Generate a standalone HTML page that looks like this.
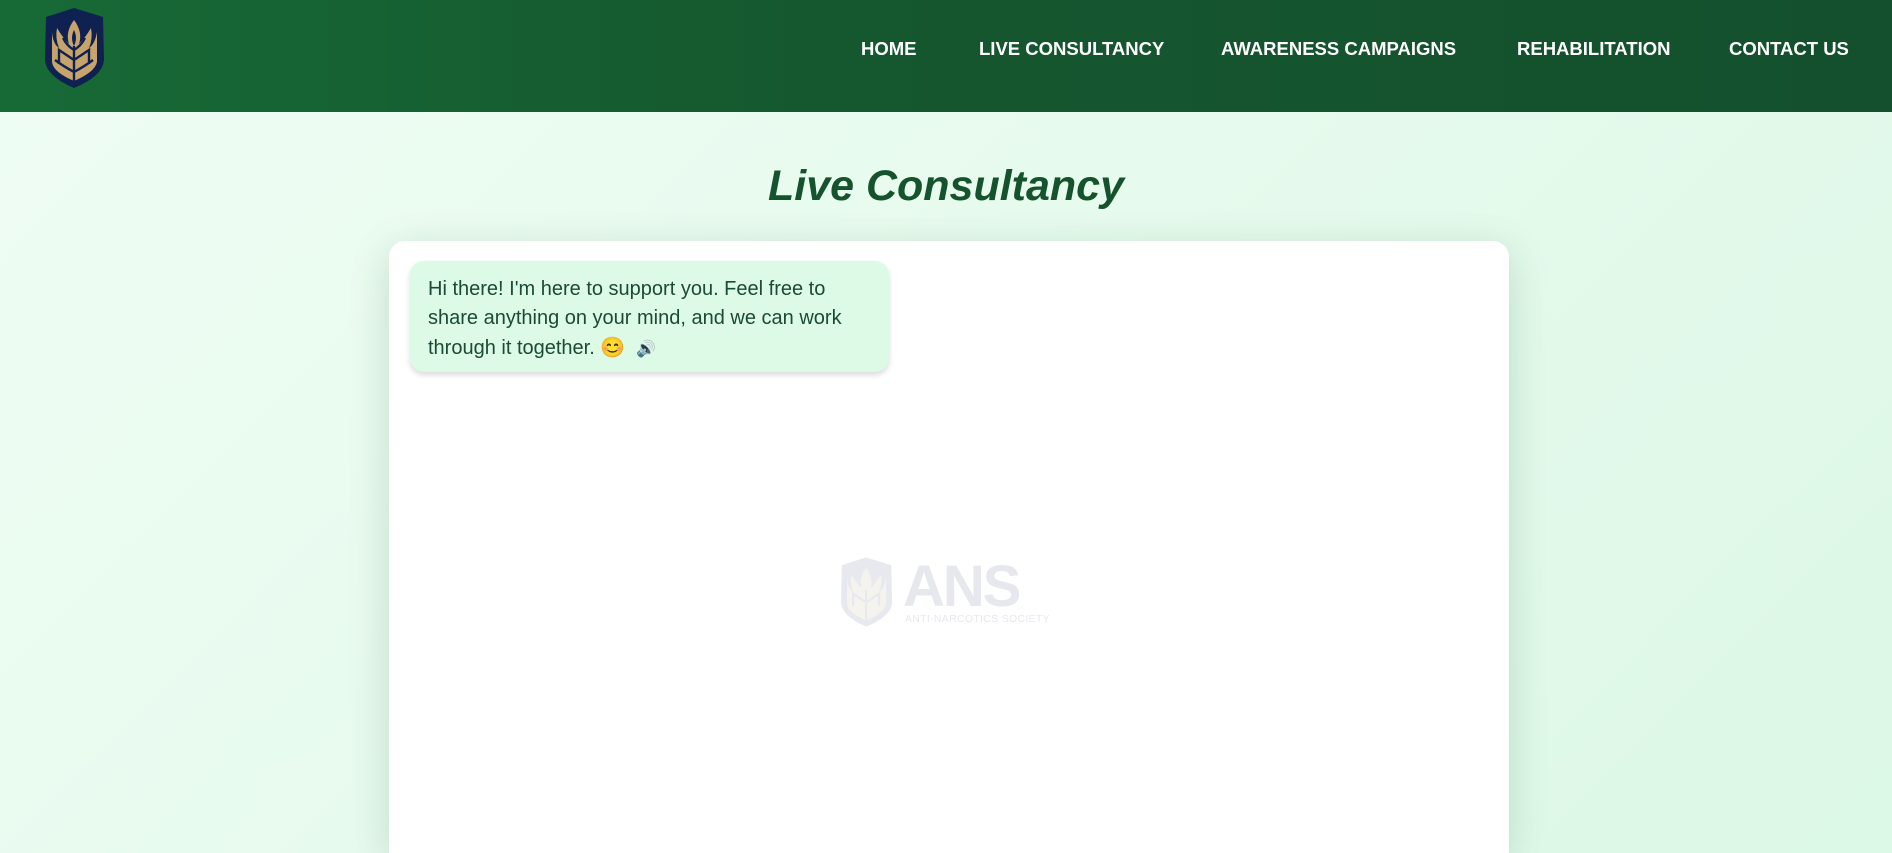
<!DOCTYPE html>
<html><head><meta charset="utf-8">
<style>
*{margin:0;padding:0;box-sizing:border-box}
html,body{width:1892px;height:853px;overflow:hidden}
body{font-family:"Liberation Sans",sans-serif;background:linear-gradient(135deg,#effdf4 0%,#e6faed 50%,#dcf8e6 100%);position:relative}
.hdr{position:absolute;left:0;top:0;width:1892px;height:112px;background:linear-gradient(90deg,#176a36 0%,#15572f 45%,#14502e 100%)}
.nav{position:absolute;top:38px;color:#fff;font-weight:bold;font-size:18.5px;white-space:nowrap}
.logo{position:absolute;left:45px;top:8px}
h1{position:absolute;left:0;width:1892px;top:162px;text-align:center;font-size:43px;font-style:italic;font-weight:bold;color:#15532e}
.card{position:absolute;left:389px;top:241px;width:1120px;height:612px;background:#fff;border-radius:16px 16px 0 0;box-shadow:0 10px 40px rgba(20,83,45,.18)}
.bub{position:absolute;left:410px;top:261px;width:479px;height:111px;background:#dcfae6;border-radius:14px;box-shadow:0 3px 6px rgba(0,0,0,.15);padding:14px 30px 14px 18px;font-size:20px;line-height:29px;color:#1c4a36}
.wm{position:absolute;left:841px;top:556px}
.ans{position:absolute;left:903px;top:553px;font-size:58px;font-weight:bold;color:#e6e8ee;letter-spacing:-2px}
.sub{position:absolute;left:905px;top:613px;font-size:10.5px;color:#e6e8ee;letter-spacing:.3px}
</style></head><body>
<div class="hdr">
<svg class="logo" width="60" height="80" viewBox="0 0 60 80">
<path d="M29 0 L58 9 L59 52 Q58 68 29 80 Q1 68 0 52 L1 9 Z" fill="#0f2150"/>
<path d="M7 24 L7 54 Q8 64 29 73 Q50 64 52 54 L52 24 Q50 36 44 40 Q48 30 46 20 Q40 30 34 36 Q38 24 29 12 Q20 24 24 36 Q18 30 12 20 Q10 30 14 40 Q8 36 7 24 Z" fill="#c6a46c"/>
<path d="M29 22 Q25 30 29 38 Q33 30 29 22 Z" fill="#0f2150"/>
<path d="M29 38 L29 74 M29 52 Q20 46 14 42 L14 56 M29 52 Q38 46 44 42 L44 56 M29 64 Q18 58 10 52 M29 64 Q40 58 48 52 M29 42 Q22 38 18 30 M29 42 Q36 38 40 30" stroke="#0f2150" stroke-width="2.4" fill="none"/>
</svg>
<div class="nav" style="left:861px">HOME</div>
<div class="nav" style="left:979px">LIVE CONSULTANCY</div>
<div class="nav" style="left:1221px">AWARENESS CAMPAIGNS</div>
<div class="nav" style="left:1517px">REHABILITATION</div>
<div class="nav" style="left:1729px">CONTACT US</div>
</div>
<h1>Live Consultancy</h1>
<div class="card"></div>
<svg class="wm" width="52" height="72" viewBox="0 0 60 80" opacity=".6">
<path d="M29 0 L58 9 L59 52 Q58 68 29 80 Q1 68 0 52 L1 9 Z" fill="#d8dbe4"/>
<path d="M7 24 L7 54 Q8 64 29 73 Q50 64 52 54 L52 24 Q50 36 44 40 Q48 30 46 20 Q40 30 34 36 Q38 24 29 12 Q20 24 24 36 Q18 30 12 20 Q10 30 14 40 Q8 36 7 24 Z" fill="#f0ece4"/>
<path d="M29 38 L29 74 M29 52 Q20 46 14 42 L14 56 M29 52 Q38 46 44 42 L44 56" stroke="#d8dbe4" stroke-width="2.4" fill="none"/>
</svg>
<div class="ans">ANS</div>
<div class="sub">ANTI-NARCOTICS SOCIETY</div>
<div class="bub">Hi there! I'm here to support you. Feel free to share anything on your mind, and we can work through it together. <span style="font-family:'Noto Color Emoji','DejaVu Sans',sans-serif">😊</span>&nbsp; <span style="font-family:'Noto Color Emoji','DejaVu Sans',sans-serif;font-size:16px">🔊</span></div>
</body></html>
